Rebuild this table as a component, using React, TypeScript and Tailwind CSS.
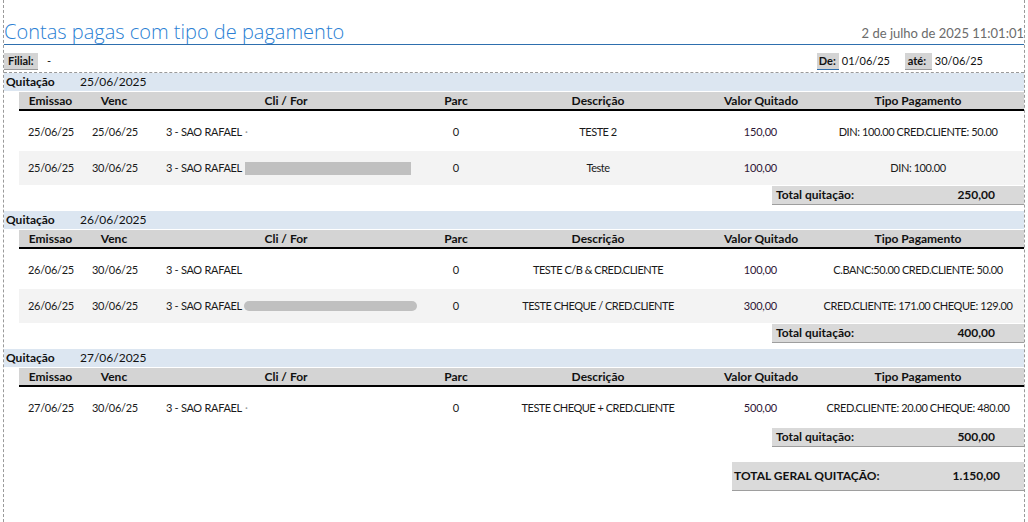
import React from "react";

interface Row {
  emissao: string;
  venc: string;
  cliente: string;
  mask?: "bar" | "pill" | "dot";
  parc: string;
  descricao: string;
  valor: string;
  tipo: string;
}

interface Group {
  data: string;
  rows: Row[];
  total: string;
}

const GROUPS: Group[] = [
  {
    data: "25/06/2025",
    total: "250,00",
    rows: [
      { emissao: "25/06/25", venc: "25/06/25", cliente: "3 - SAO RAFAEL", mask: "dot", parc: "0", descricao: "TESTE 2", valor: "150,00", tipo: "DIN: 100.00 CRED.CLIENTE: 50.00" },
      { emissao: "25/06/25", venc: "30/06/25", cliente: "3 - SAO RAFAEL", mask: "bar", parc: "0", descricao: "Teste", valor: "100,00", tipo: "DIN: 100.00" },
    ],
  },
  {
    data: "26/06/2025",
    total: "400,00",
    rows: [
      { emissao: "26/06/25", venc: "30/06/25", cliente: "3 - SAO RAFAEL", parc: "0", descricao: "TESTE C/B & CRED.CLIENTE", valor: "100,00", tipo: "C.BANC:50.00 CRED.CLIENTE: 50.00" },
      { emissao: "26/06/25", venc: "30/06/25", cliente: "3 - SAO RAFAEL", mask: "pill", parc: "0", descricao: "TESTE CHEQUE / CRED.CLIENTE", valor: "300,00", tipo: "CRED.CLIENTE: 171.00 CHEQUE: 129.00" },
    ],
  },
  {
    data: "27/06/2025",
    total: "500,00",
    rows: [
      { emissao: "27/06/25", venc: "30/06/25", cliente: "3 - SAO RAFAEL", mask: "dot", parc: "0", descricao: "TESTE CHEQUE + CRED.CLIENTE", valor: "500,00", tipo: "CRED.CLIENTE: 20.00 CHEQUE: 480.00" },
    ],
  },
];

// larguras das colunas, a partir de x=19
const COLS = "grid-cols-[63px_64px_280px_60px_224px_102px_1fr]";

function GroupBlock({ group }: { group: Group }) {
  return (
    <div className="mb-[6px]">
      <div className="h-[18px] bg-[#dce6f1] flex items-center text-[12px] text-[#111]">
        <span className="w-[76px] pl-[2px] font-bold">Quitação</span>
        <span>{group.data}</span>
      </div>

      <div className="ml-[15px] mt-[1px]">
        <div className={`grid ${COLS} h-[19px] bg-[#d4d4d4] border-b-2 border-black items-center text-[12px] font-bold text-[#111] text-center`}>
          <span>Emissao</span>
          <span>Venc</span>
          <span>Cli / For</span>
          <span>Parc</span>
          <span>Descrição</span>
          <span>Valor Quitado</span>
          <span>Tipo Pagamento</span>
        </div>

        {group.rows.map((r, i) => (
          <div
            key={i}
            className={`grid ${COLS} items-center text-[11px] text-[#1a1a1a] ${
              i % 2 === 0 ? "h-[40px] pt-[3px] bg-white" : "h-[34px] bg-[#f3f3f3]"
            }`}
          >
            <span className="pl-[9px] tracking-[-0.3px]">{r.emissao}</span>
            <span className="pl-[10px] tracking-[-0.3px]">{r.venc}</span>
            <span className="pl-[20px] flex items-center whitespace-nowrap tracking-[-0.3px]">
              {r.cliente}
              {r.mask === "dot" && <span className="ml-[3px] text-[#9a9a9a]">·</span>}
              {r.mask === "bar" && <span className="ml-[3px] inline-block w-[166px] h-[13px] bg-[#c0c0c0]" />}
              {r.mask === "pill" && <span className="ml-[2px] inline-block w-[173px] h-[10px] rounded-full bg-[#c0c0c0]" />}
            </span>
            <span className="text-center">{r.parc}</span>
            <span className="text-center whitespace-nowrap tracking-[-0.5px]">{r.descricao}</span>
            <span className="text-right pr-[35px] tracking-[-0.2px] text-[#2e1636]">{r.valor}</span>
            <span className="text-center whitespace-nowrap tracking-[-0.4px]">{r.tipo}</span>
          </div>
        ))}

        <div className="flex justify-end mt-[1px]">
          <div className="w-[252px] h-[19px] bg-[#d9d9d9] border-b border-[#9e9e9e] flex items-center justify-between pl-[4px] pr-[29px] text-[12px] font-bold text-[#111]">
            <span>Total quitação:</span>
            <span>{group.total}</span>
          </div>
        </div>
      </div>
    </div>
  );
}

export default function App() {
  return (
    <div className="w-[1028px] h-[522px] bg-white overflow-hidden font-['Lato',sans-serif]">
      <div className="ml-[3px] w-[1022px] h-full border-x border-dashed border-[#9a9a9a]">
        {/* cabeçalho do relatório */}
        <div className="border-b border-dashed border-[#9a9a9a] pb-[2px]">
          <div className="h-[45px] border-b border-[#2e6fae] flex items-end justify-between">
            <h1 className="font-['Open_Sans',sans-serif] font-light text-[20px] leading-[24px] text-[#2b7fd4]">
              Contas pagas com tipo de pagamento
            </h1>
            <span className="text-[13px] leading-[16px] mb-[3px] text-[#6b6b6b]">2 de julho de 2025 11:01:01</span>
          </div>

          <div className="mt-[8px] h-[17px] flex items-stretch text-[11px] text-[#111]">
            <span className="px-[4px] bg-[#d4d4d4] border-b border-[#9a9a9a] font-bold flex items-center w-[34px]">Filial:</span>
            <span className="pl-[9px] flex items-center">-</span>
            <div className="flex-1" />
            <span className="w-[22px] px-[2px] bg-[#d4d4d4] border-b border-[#2e6fae] font-bold flex items-center">De:</span>
            <span className="w-[66px] pl-[3px] flex items-center">01/06/25</span>
            <span className="w-[27px] px-[3px] bg-[#d4d4d4] border-b border-[#9a9a9a] font-bold flex items-center">até:</span>
            <span className="pl-[3px] mr-[41px] flex items-center">30/06/25</span>
          </div>
        </div>

        {GROUPS.map((g) => (
          <GroupBlock key={g.data} group={g} />
        ))}

        <div className="flex justify-end mt-[15px]">
          <div className="w-[292px] h-[29px] bg-[#dadada] border-b border-[#9e9e9e] flex items-center justify-between pl-[2px] pr-[24px] text-[12px] font-bold text-[#111]">
            <span>TOTAL GERAL QUITAÇÃO:</span>
            <span>1.150,00</span>
          </div>
        </div>
      </div>
    </div>
  );
}
